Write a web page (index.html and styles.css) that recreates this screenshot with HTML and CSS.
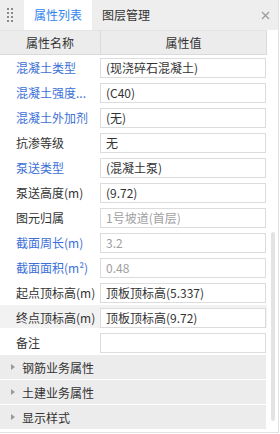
FILE: index.html
```
<!DOCTYPE html>
<html>
<head>
<meta charset="utf-8">
<link rel="stylesheet" href="styles.css">
</head>
<body>
<div class="panel">
  <div class="tabs">
    <div class="grip"><i></i><i></i><i></i><i></i><i></i><i></i><i></i><i></i></div>
    <div class="tab active">属性列表</div>
    <div class="tab">图层管理</div>
    <div class="close">
      <svg width="9" height="9" viewBox="0 0 9 9"><path d="M1 1L8 8M8 1L1 8" stroke="#9a9a9a" stroke-width="1.2"/></svg>
    </div>
  </div>
  <div class="body">
    <div class="table">
      <div class="head">
        <div class="hcell name">属性名称</div>
        <div class="hcell value">属性值</div>
      </div>
      <div class="row"><div class="label blue">混凝土类型</div><div class="val">(现浇碎石混凝土)</div></div>
      <div class="row"><div class="label blue">混凝土强度...</div><div class="val">(C40)</div></div>
      <div class="row"><div class="label blue">混凝土外加剂</div><div class="val">(无)</div></div>
      <div class="row"><div class="label">抗渗等级</div><div class="val">无</div></div>
      <div class="row"><div class="label blue">泵送类型</div><div class="val">(混凝土泵)</div></div>
      <div class="row"><div class="label">泵送高度(m)</div><div class="val">(9.72)</div></div>
      <div class="row"><div class="label">图元归属</div><div class="val dim">1号坡道(首层)</div></div>
      <div class="row"><div class="label blue">截面周长(m)</div><div class="val dim">3.2</div></div>
      <div class="row"><div class="label blue">截面面积(m²)</div><div class="val dim">0.48</div></div>
      <div class="row"><div class="label">起点顶标高(m)</div><div class="val">顶板顶标高(5.337)</div></div>
      <div class="row hover"><div class="label">终点顶标高(m)</div><div class="val">顶板顶标高(9.72)</div></div>
      <div class="row"><div class="label">备注</div><div class="val"></div></div>
      <div class="group"><span class="arrow"></span>钢筋业务属性</div>
      <div class="group"><span class="arrow"></span>土建业务属性</div>
      <div class="group"><span class="arrow"></span>显示样式</div>
    </div>
    <div class="scrollbar"><div class="thumb"></div></div>
  </div>
</div>
</body>
</html>
```
FILE: styles.css
```
* { box-sizing: border-box; }
html, body { margin: 0; padding: 0; background: #fff; }
body {
  font-family: "Noto Sans CJK SC", "Microsoft YaHei", sans-serif;
  font-size: 12px;
  color: #333;
}
.panel {
  width: 279px;
  height: 433px;
  border-right: 1px solid #e2e2e2;
  border-bottom: 1px solid #e2e2e2;
  display: flex;
  flex-direction: column;
  overflow: hidden;
}
.tabs {
  height: 30px;
  background: #eeeeee;
  display: flex;
  align-items: stretch;
  position: relative;
  flex: none;
}
.grip {
  width: 24px;
  display: grid;
  grid-template-columns: 2px 2px;
  grid-auto-rows: 2px;
  column-gap: 2px;
  row-gap: 2px;
  align-content: center;
  padding-left: 7px;
}
.grip i { display: block; width: 2px; height: 2px; background: #8a8a8a; }
.tab {
  padding: 0 10px;
  line-height: 30px;
  font-size: 12px;
  color: #333;
}
.tab.active { background: #fff; color: #2f86ee; }
.close {
  margin-left: auto;
  width: 30px;
  display: flex;
  align-items: center;
  padding-left: 13px;
}
.body {
  flex: 1;
  display: flex;
  min-height: 0;
}
.table { width: 267px; flex: none; }
.head {
  display: flex;
  height: 25px;
  background: #ececec;
  border-bottom: 1px solid #dadada;
  border-top: 1px solid #e4e4e4;
}
.hcell {
  text-align: center;
  line-height: 23px;
}
.hcell.name { width: 101px; border-right: 1px solid #dadada; }
.hcell.value { flex: 1; border-right: 1px solid #dadada; }
.row {
  display: flex;
  height: 25px;
  align-items: center;
}
.row.hover { background: linear-gradient(#f2f2f2, #f2f2f2) 0 0 / 100% 23px no-repeat; }
.label {
  width: 100px;
  padding-left: 16px;
  white-space: nowrap;
  line-height: 20px;
}
.label.blue { color: #3b6fd9; }
.val {
  width: 166px;
  height: 20px;
  border: 1px solid #dcdcdc;
  background: #fff;
  padding-left: 5px;
  line-height: 18px;
  white-space: nowrap;
  overflow: hidden;
}
.val.dim { color: #a0a0a0; }
.group {
  height: 24px;
  margin-bottom: 1px;
  width: 266px;
  background: #ececec;
  display: flex;
  align-items: center;
  padding-left: 11px;
}
.arrow {
  width: 0;
  height: 0;
  border-left: 4px solid #9a9a9a;
  border-top: 3px solid transparent;
  border-bottom: 3px solid transparent;
  margin-right: 7px;
}
.scrollbar {
  flex: 1;
  display: flex;
  justify-content: center;
  padding-top: 202px;
}
.thumb {
  width: 4px;
  height: 189px;
  background: #e3e3e3;
  border-radius: 2px;
}
```
